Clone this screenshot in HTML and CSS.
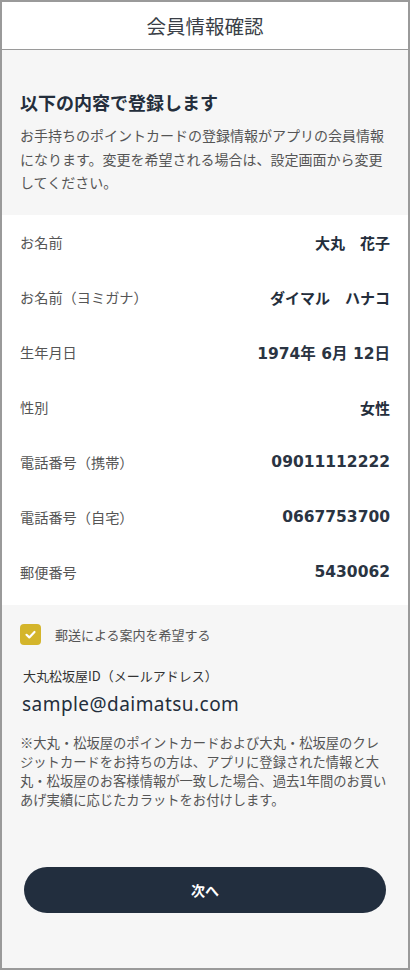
FILE: index.html
```html
<!DOCTYPE html>
<html lang="ja">
<head>
<meta charset="utf-8">
<link rel="stylesheet" href="styles.css">
</head>
<body>
<div class="frame">
  <header class="header">会員情報確認</header>
  <section class="intro">
    <h1 class="intro-title">以下の内容で登録します</h1>
    <p class="intro-text">お手持ちのポイントカードの登録情報がアプリの会員情報になります。変更を希望される場合は、設定画面から変更してください。</p>
  </section>
  <section class="info">
    <div class="row"><span class="label">お名前</span><span class="value">大丸　花子</span></div>
    <div class="row"><span class="label">お名前（ヨミガナ）</span><span class="value">ダイマル　ハナコ</span></div>
    <div class="row"><span class="label">生年月日</span><span class="value num">1974年 6月 12日</span></div>
    <div class="row"><span class="label">性別</span><span class="value">女性</span></div>
    <div class="row"><span class="label">電話番号（携帯）</span><span class="value num">09011112222</span></div>
    <div class="row"><span class="label">電話番号（自宅）</span><span class="value num">0667753700</span></div>
    <div class="row"><span class="label">郵便番号</span><span class="value num">5430062</span></div>
  </section>
  <section class="extra">
    <label class="check">
      <span class="box"><svg viewBox="0 0 21 21" width="21" height="21"><path d="M6.5 10.8 L9.3 13.4 L14.5 8" fill="none" stroke="#fff" stroke-width="2.2" stroke-linecap="round" stroke-linejoin="round"/></svg></span>
      <span class="check-label">郵送による案内を希望する</span>
    </label>
    <div class="id-label">大丸松坂屋ID（メールアドレス）</div>
    <div class="email">sample@daimatsu.com</div>
    <p class="note">※大丸・松坂屋のポイントカードおよび大丸・松坂屋のクレジットカードをお持ちの方は、アプリに登録された情報と大丸・松坂屋のお客様情報が一致した場合、過去1年間のお買いあげ実績に応じたカラットをお付けします。</p>
    <button class="next">次へ</button>
  </section>
</div>
</body>
</html>
```
FILE: styles.css
```css
* { box-sizing: border-box; }
html, body { margin: 0; padding: 0; }
body {
  font-family: "Noto Sans", "Noto Sans CJK JP", sans-serif;
  color: #242e3c;
}
.frame {
  width: 410px;
  height: 970px;
  border: 2px solid #9a9a9a;
  background: #f6f6f6;
  display: flex;
  flex-direction: column;
}
.header {
  height: 48px;
  flex: none;
  background: #fff;
  border-bottom: 1.5px solid #9a9a9a;
  display: flex;
  align-items: center;
  justify-content: center;
  font-size: 19.5px;
  color: #3a3f47;
  font-family: "Noto Sans CJK JP", sans-serif;
}
.intro {
  padding: 40px 18px 20px;
}
.intro-title {
  margin: 0;
  font-size: 18px;
  line-height: 24px;
  font-weight: 700;
  color: #242e3c;
  font-family: "Noto Sans CJK JP", sans-serif;
}
.intro-text {
  margin: 10px 0 0;
  font-size: 14px;
  line-height: 23.5px;
  color: #555;
  font-family: "Noto Sans CJK JP", sans-serif;
}
.info {
  background: #fff;
  padding: 0 18px 5px;
}
.row {
  height: 55px;
  display: flex;
  align-items: center;
  justify-content: space-between;
}
.label {
  font-size: 14.2px;
  color: #555;
  font-family: "Noto Sans CJK JP", sans-serif;
}
.value {
  font-size: 15px;
  font-weight: 700;
  color: #242e3c;
  font-family: "Noto Sans CJK JP", sans-serif;
}
.value.num {
  font-family: "DejaVu Sans", "Noto Sans CJK JP", sans-serif;
  font-size: 15.5px;
  font-weight: 700;
  color: #2a3442;
}
.extra {
  padding: 19px 18px 0;
  flex: 1;
  display: flex;
  flex-direction: column;
}
.check {
  display: flex;
  align-items: center;
  gap: 14px;
}
.box {
  width: 21px;
  height: 21px;
  border-radius: 4px;
  background: #d4b52b;
  display: flex;
}
.check-label {
  font-size: 13px;
  color: #555;
  font-family: "Noto Sans CJK JP", sans-serif;
}
.id-label {
  margin-top: 22px;
  padding-left: 3px;
  font-size: 13px;
  line-height: 18px;
  color: #333;
  font-family: "Noto Sans CJK JP", sans-serif;
}
.email {
  margin-top: 6px;
  padding-left: 2px;
  font-size: 19px;
  line-height: 26px;
  letter-spacing: 0.45px;
  color: #242e3c;
}
.note {
  margin: 16px 0 0;
  font-size: 13.3px;
  line-height: 19px;
  color: #555;
  font-family: "Noto Sans CJK JP", sans-serif;
}
.next {
  margin: 58px 4px 0;
  height: 46px;
  border: none;
  border-radius: 23px;
  background: #222e3e;
  color: #fff;
  font-size: 14px;
  font-weight: 700;
  font-family: "Noto Sans CJK JP", sans-serif;
}
```
